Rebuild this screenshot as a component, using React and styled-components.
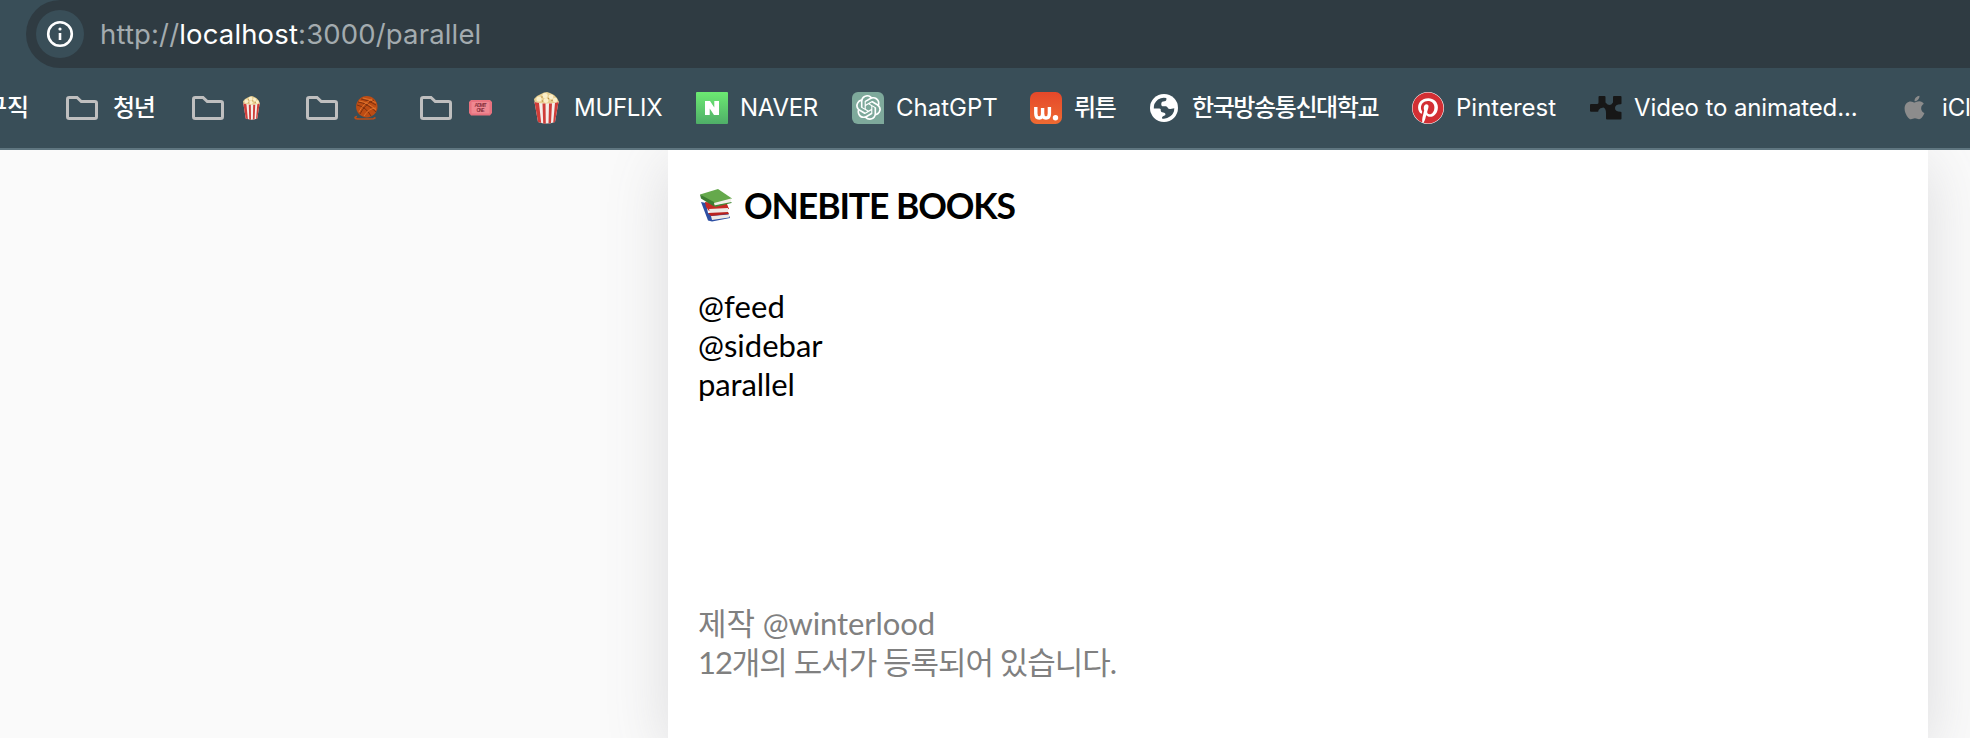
import React from "react";
import styled, { createGlobalStyle } from "styled-components";
import { SiOpenai } from "react-icons/si";
import { FaApple, FaPinterest } from "react-icons/fa";

const Global = createGlobalStyle`
  * { box-sizing: border-box; }
  body { margin: 0; background: #fafafa; overflow: hidden; }
`;

const Page = styled.div`
  height: 738px;
  display: flex;
  flex-direction: column;
  overflow: hidden;
`;

const Chrome = styled.header`
  flex: none;
  height: 150px;
  background: #394e58;
  border-bottom: 2px solid #5f7680;
  position: relative;
  z-index: 1;
  overflow: hidden;
  font-family: Inter, "Noto Sans CJK KR", sans-serif;
`;

const AddressBar = styled.div`
  height: 68px;
  margin-left: 26px;
  padding-left: 10px;
  border-radius: 34px 0 0 34px;
  background: #2f3b42;
  display: flex;
  align-items: center;
  gap: 16px;
`;

const InfoButton = styled.div`
  width: 48px;
  height: 48px;
  border-radius: 50%;
  background: #394e58;
  display: flex;
  align-items: center;
  justify-content: center;
`;

const Url = styled.div`
  font-size: 27.5px;
  line-height: 34px;
  letter-spacing: 0.15px;
  color: #a3abaf;
  white-space: nowrap;
`;

const Host = styled.span`
  color: #fff;
`;

const Bookmarks = styled.nav`
  height: 78px;
  padding-top: 1px;
  margin-left: -15px;
  display: flex;
  align-items: center;
`;

const Bookmark = styled.div`
  flex: none;
  width: ${(p) => p.$w}px;
  height: 32px;
  display: flex;
  align-items: center;
  gap: ${(p) => p.$gap ?? 12}px;
`;

const Label = styled.span`
  font-size: 24px;
  line-height: 32px;
  font-weight: ${(p) => (p.$ko ? 500 : 400)};
  letter-spacing: ${(p) => p.$track ?? (p.$ko ? -1.4 : -0.12)}px;
  color: #fff;
  white-space: nowrap;
`;

const Tile = styled.span`
  flex: none;
  width: 32px;
  height: 32px;
  display: flex;
  align-items: center;
  justify-content: center;
  border-radius: ${(p) => p.$radius || "0"};
  background: ${(p) => p.$bg || "none"};
  color: ${(p) => p.$color || "#fff"};
`;

const Main = styled.main`
  flex: 1;
  width: 1260px;
  margin-left: 668px;
  padding: 0 30px;
  background: #fff;
  box-shadow: rgba(100, 100, 111, 0.2) 0 14px 58px 0;
  font-family: Lato, "Noto Sans CJK KR", sans-serif;
  font-size: 31px;
  line-height: 39px;
`;

const Title = styled.h1`
  margin: 0 0 0 2px;
  height: 110px;
  display: flex;
  align-items: center;
  gap: 12px;
  font-size: 35.5px;
  font-weight: 700;
  letter-spacing: -1.1px;
`;

const Content = styled.section`
  padding-top: 27px;
  height: 344px;
`;

const Line = styled.div`
  height: 39px;
  letter-spacing: ${(p) => p.$track || 0}px;
  white-space: nowrap;
`;

const Footer = styled.footer`
  color: #808080;
`;

const Info = () => (
  <svg width="28" height="28" viewBox="0 0 28 28">
    <circle cx="14" cy="14" r="11.8" fill="none" stroke="#fff" strokeWidth="2.6" />
    <path d="M14 13v7" stroke="#fff" strokeWidth="2.6" />
    <circle cx="14" cy="9" r="1.6" fill="#fff" />
  </svg>
);

const Folder = () => (
  <svg width="32" height="24" viewBox="0 0 32 24">
    <path
      d="M3.300 1.500H11l4.300 4h13.400q1.800 0 1.800 1.800v13.400q0 1.800-1.800 1.800H3.300q-1.800 0-1.800-1.800V3.300q0-1.800 1.800-1.800z"
      fill="none"
      stroke="#bfbfbf"
      strokeWidth="3"
    />
  </svg>
);

const Popcorn = ({ w = 25, h = 32 }) => (
  <svg width={w} height={h} viewBox="0 0 25 32" preserveAspectRatio="none">
    <path d="M1 12 0 7l3-3 4-2 3-1.500 3-.5 3 1 4 2 3 3 2 4-2 3z" fill="#e8cf91" />
    <g fill="#fbefc9">
      <circle cx="5" cy="7" r="2.600" /><circle cx="11" cy="3.500" r="2.600" />
      <circle cx="17" cy="5" r="2.400" /><circle cx="21" cy="8" r="2.200" />
      <circle cx="12" cy="8.500" r="2.400" />
    </g>
    <g fill="#bd9148">
      <circle cx="8" cy="5" r=".8" /><circle cx="14.500" cy="6.500" r=".8" />
      <circle cx="8.500" cy="9" r=".7" /><circle cx="18" cy="8.500" r=".8" />
    </g>
    <path d="M.5 10q12 3 24 0L21 30q-8.500 3-17 0z" fill="#f4eeea" />
    <path d="M.5 10l4.500 1 2.200 20-3.200-1zM8.500 11.500h3l.3 20.300-2.600-.3zM15 11.500h3L17 31l-2.500.6zM21 11l3.500-1L21 30l-1.800.7z" fill="#cf3d39" />
  </svg>
);

const Yarn = () => (
  <svg width="24" height="24" viewBox="0 0 24 24">
    <path d="M3 20.500q-3 .5-1.500 2 2 1 18 .2l2-1.200" fill="none" stroke="#bd4d16" strokeWidth="1.600" />
    <circle cx="12.800" cy="10.800" r="10.700" fill="#bd4c13" />
    <path d="M4 6q9 1 18 10M3 9q9 2 14 11M7 3q8 1 15 6M6 18Q11 8 20 4" fill="none" stroke="#6f2a0c" strokeWidth=".8" />
    <path d="M5 5q9 1 17 9M9 2q8 1 13 5M5 16Q9 8 18 3M10 20q5-8 12-8" fill="none" stroke="#e2762f" strokeWidth=".9" />
  </svg>
);

const TicketText = styled.text`
  font: 700 5px "Liberation Sans", sans-serif;
  fill: #8c3442;
  text-anchor: middle;
`;

const Ticket = () => (
  <svg width="23" height="16" viewBox="0 0 23 16">
    <path d="M2 0h19l2 2v11l-2 2.500H2L0 13V2z" fill="#e8727f" />
    <path d="M2.500 2h18v11.500h-18z" fill="#ef8791" />
    <TicketText x="11.500" y="7" textLength="12">ADMIT</TicketText>
    <TicketText x="11.500" y="12" textLength="8">ONE</TicketText>
  </svg>
);

const Naver = () => (
  <svg width="32" height="32" viewBox="0 0 32 32">
    <defs>
      <linearGradient id="nv" x1="0" y1="0" x2="0" y2="1">
        <stop offset="0" stopColor="#6cea72" /><stop offset="1" stopColor="#4fae68" />
      </linearGradient>
    </defs>
    <rect width="32" height="32" rx="1" fill="url(#nv)" />
    <path d="M9 9h5l4.300 6.500V9H23v14h-5l-4.300-6.500V23H9z" fill="#fff" />
  </svg>
);

const Wrtn = () => (
  <svg width="32" height="32" viewBox="0 0 32 32">
    <defs>
      <linearGradient id="wr" x1="0" y1="0" x2="0" y2="1">
        <stop offset="0" stopColor="#e5482a" /><stop offset="1" stopColor="#ee6a32" />
      </linearGradient>
    </defs>
    <rect width="32" height="32" rx="6.500" fill="url(#wr)" />
    <path d="M5.800 15v6.500q0 4.500 3.400 4.500t3.400-4.500V16M12.600 21.500q0 4.500 3.400 4.500t3.400-4.500V15" fill="none" stroke="#fff" strokeWidth="3.400" />
    <circle cx="25.500" cy="25.800" r="2.700" fill="#fff" />
  </svg>
);

const Globe = () => (
  <svg width="28" height="28" viewBox="0 0 28 28">
    <circle cx="14" cy="14" r="14" fill="#fff" />
    <path d="M3.800 14.500Q3.500 9 8 5.500 12 2.800 16.300 4q.7 3-1.800 3.300-3 0-3.200 2.200-.5 2 1 2.700H16q1.500.3 2 2 .5 1 2.500.8l3.800-.8q0 5-4 8Q16.500 25.400 12 24.500q-.5-2 1.500-2.500 2.300-.3 2-2-.3-1.500-2.300-1.500-2.500 0-2.500-2v-1.300q-.3-.7-1.500-.7z" fill="#394e58" />
  </svg>
);

const Blocks = () => (
  <svg width="32" height="32" viewBox="0 0 32 32">
    <path d="M1 12h6q1.500 0 1.500-1.500V5q0-1 1-1h5q1 0 1 1v5.500q2.200 2.500 4 2.500t3.500-2.500V5q0-1 1-1h6.500q1 0 1 1v6.500q0 .7-1 .7-5.500 0-5.500 3.800t5.500 3.800q1 0 1 .7v6q0 1-1 1H17q-1 0-1-1v-5.500q0-4.500-2.500-5.500-3.500 0-5 2.500v.7q0 1-1 1H1q-1 0-1-1V13q0-1 1-1z" fill="#171717" />
  </svg>
);

const Books = () => (
  <svg width="32" height="33" viewBox="0 0 32 33">
    <path d="M1 13l5 1 2 10 3 1 17-1 2 5-18 3.500-4-1z" fill="#2d4fa3" />
    <path d="M11 27l18-1.500v3L12 31z" fill="#eee9e5" />
    <path d="M5 13l22 2 2 5-20 2-3-4z" fill="#c62a25" />
    <path d="M9 20l19-1v4l-18 1.500z" fill="#eee9e5" />
    <path d="M8 24l20-1 1 2-18 2z" fill="#b9211e" />
    <path d="M0 5.500L18 0l14 9.500-18 6.500z" fill="#65a94c" />
    <path d="M0 5.500L14 13v4.500L1 9.500z" fill="#3d7d32" />
    <path d="M14 14l17-4.500v3.500l-16 4z" fill="#f2efe9" />
    <path d="M14 16.500L31.500 13v1L15 18z" fill="#438b37" />
  </svg>
);

export default function App() {
  return (
    <Page>
      <Global />
      <Chrome>
        <AddressBar>
          <InfoButton><Info /></InfoButton>
          <Url>http://<Host>localhost</Host>:3000/parallel</Url>
        </AddressBar>
        <Bookmarks>
          <Bookmark $w={81}><Label $ko $track={0}>구직</Label></Bookmark>
          <Bookmark $w={126} $gap={15}><Folder /><Label $ko>청년</Label></Bookmark>
          <Bookmark $w={114} $gap={19}><Folder /><Popcorn w={17} h={24} /></Bookmark>
          <Bookmark $w={114} $gap={16}><Folder /><Yarn /></Bookmark>
          <Bookmark $w={110} $gap={17}><Folder /><Ticket /></Bookmark>
          <Bookmark $w={166}><Tile><Popcorn /></Tile><Label $track={-0.3}>MUFLIX</Label></Bookmark>
          <Bookmark $w={156}><Tile><Naver /></Tile><Label $track={-0.3}>NAVER</Label></Bookmark>
          <Bookmark $w={178}>
            <Tile $bg="#7ea99b" $radius="6px 6px 0 6px"><SiOpenai size={25} /></Tile>
            <Label $track={0}>ChatGPT</Label>
          </Bookmark>
          <Bookmark $w={118}><Tile><Wrtn /></Tile><Label $ko>뤼튼</Label></Bookmark>
          <Bookmark $w={264}><Tile><Globe /></Tile><Label $ko>한국방송통신대학교</Label></Bookmark>
          <Bookmark $w={178}>
            <Tile $bg="#fff" $radius="50%" $color="#d32f34"><FaPinterest size={32} /></Tile>
            <Label $track={0}>Pinterest</Label>
          </Bookmark>
          <Bookmark $w={308}><Tile><Blocks /></Tile><Label>Video to animated...</Label></Bookmark>
          <Bookmark $w={120}><Tile $color="#8c8c8c"><FaApple size={27} /></Tile><Label>iCloud</Label></Bookmark>
        </Bookmarks>
      </Chrome>
      <Main>
        <Title><Books />ONEBITE BOOKS</Title>
        <Content>
          <Line $track={0.15}>@feed</Line>
          <Line>@sidebar</Line>
          <Line $track={-0.1}>parallel</Line>
        </Content>
        <Footer>
          <Line $track={-0.1}>제작 @winterlood</Line>
          <Line $track={-1.05}>12개의 도서가 등록되어 있습니다.</Line>
        </Footer>
      </Main>
    </Page>
  );
}
